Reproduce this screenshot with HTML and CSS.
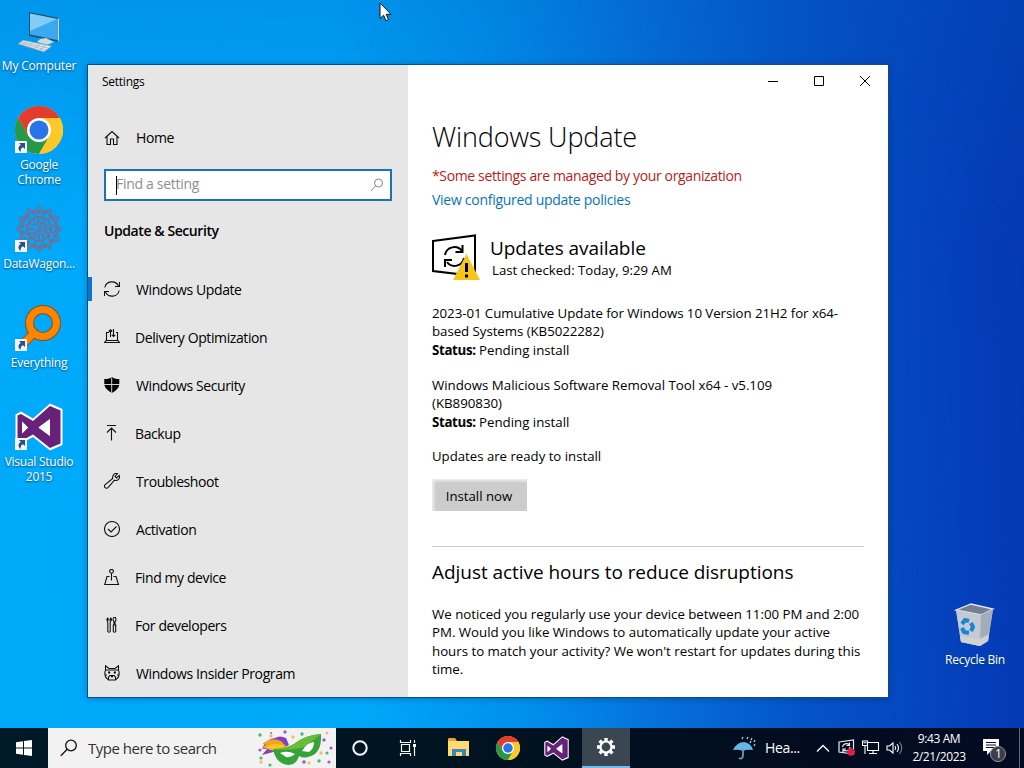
FILE: index.html
```html
<!DOCTYPE html>
<html lang="en">
<head>
<meta charset="utf-8">
<title>Settings</title>
<link rel="stylesheet" href="styles.css">
</head>
<body>
<svg class="defs" width="0" height="0">
  <defs>
    <symbol id="chrome" viewBox="0 0 48 48">
      <circle cx="24" cy="24" r="24" fill="#fcc928"/>
      <path d="M3.2 12A24 24 0 0 0 24 48L34.400 30 24 24 13.600 30Z" fill="#24994a"/>
      <path d="M24 12H44.800A24 24 0 0 1 24 48L34.400 30Z" fill="#fcc928"/>
      <path d="M3.200 12A24 24 0 0 1 44.800 12H24L13.600 30Z" fill="#e33b2e"/>
      <circle cx="24" cy="24" r="12" fill="#fff"/>
      <circle cx="24" cy="24" r="9.500" fill="#2874e8"/>
    </symbol>
    <symbol id="vs" viewBox="0 0 48 48">
      <path d="M35 .5 47.500 6V42L35 47.500 18 34 6 40.500.5 37V11.500L6 8.500 18 15.500Z" fill="#fff"/>
      <path d="M35 3 45.500 7.500V40.500L35 45 18 31.500 6 38 2.500 36V12.500L6 11 18 18ZM35 16 23.500 24.500 35 33ZM7 18.500V30.500L13 24.500Z" fill="#68217a"/>
      <path d="M35 16 23.500 24.500 35 33ZM7 18.500V30.500L13 24.500Z" fill="#fff"/>
    </symbol>
    <symbol id="shortcut" viewBox="0 0 12 12">
      <path d="M0 0H12V12H0Z" fill="#f3f7fc"/>
      <path d="M4 2H10V8L8 6.200C6 7.200 5.500 8.500 5.600 11 2.500 8.500 3 5.500 5.900 4.100Z" fill="#294f91"/>
    </symbol>
  </defs>
</svg>

<div class="desktop">
  <div class="shortcut-item computer">
    <svg width="48" height="48" viewBox="0 0 48 48">
      <path d="M14 4 44 10V34L14 28Z" fill="#294d65"/>
      <path d="M15 5.500 42 11V32L15 26.500Z" fill="#39aaf2"/>
      <path d="M15 5.500 42 11 15 23Z" fill="#82ccf8"/>
      <path d="M42.500 11 44 10V34L42.500 32Z" fill="#c4d8e2"/>
      <path d="M25 31 31 30 39 34 32 37 22 34Z" fill="#c8dce8"/>
      <path d="M8 32 37 38 29 44 3 36Z" fill="#dce6eb" stroke="#7894a6" stroke-width=".8"/>
      <path d="M7 34 33 40M5 35 31 42M12 33 8 37M18 34 13 39M25 36 19 41M31 37 25 42" stroke="#9eb3c2" stroke-width=".7"/>
    </svg>
    <span>My Computer</span>
  </div>
  <div class="shortcut-item google">
    <svg width="48" height="48"><use href="#chrome"/><use href="#shortcut" y="35" width="12" height="12"/></svg>
    <span>Google<br>Chrome</span>
  </div>
  <div class="shortcut-item wagon">
    <svg width="48" height="48" viewBox="0 0 48 48">
      <g fill="none" stroke="#5f7aa8" stroke-width="1.300" transform="translate(24 24)">
        <g id="rosette"><path d="M0-23 6-16 0-9-6-16ZM0 23 6 16 0 9-6 16ZM-12-18 12-18M-12 18H12M-6-6 10 6"/></g>
        <use href="#rosette" transform="rotate(30)"/><use href="#rosette" transform="rotate(60)"/><use href="#rosette" transform="rotate(90)"/><use href="#rosette" transform="rotate(120)"/><use href="#rosette" transform="rotate(150)"/>
        <g stroke="#a5566e"><circle r="7" stroke-dasharray="3 2"/><circle r="12" stroke-dasharray="4 2"/><circle r="17" stroke-dasharray="3 3"/></g>
      </g>
      <use href="#shortcut" y="35" width="12" height="12"/>
    </svg>
    <span>DataWagon...</span>
  </div>
  <div class="shortcut-item everything">
    <svg width="48" height="48" viewBox="0 0 48 48">
      <path d="M20 28 6 42" stroke="#a4540c" stroke-width="9"/>
      <circle cx="28" cy="19" r="13.500" fill="none" stroke="#87500f" stroke-width="9"/>
      <path d="M20 28 6 42" stroke="#ff8500" stroke-width="7"/>
      <circle cx="28" cy="19" r="13.500" fill="none" stroke="#ff8500" stroke-width="7"/>
      <use href="#shortcut" y="35" width="12" height="12"/>
    </svg>
    <span>Everything</span>
  </div>
  <div class="shortcut-item studio">
    <svg width="48" height="48"><use href="#vs"/><use href="#shortcut" y="35" width="12" height="12"/></svg>
    <span>Visual Studio<br>2015</span>
  </div>
  <div class="shortcut-item bin">
    <svg width="48" height="48" viewBox="0 0 48 48">
      <path d="M5 10 20 4 42 9 37 41 29 46 10 42Z" fill="#b4bdcb"/>
      <path d="M5 10 20 4 42 9 30 15Z" fill="#747f91" stroke="#e2e9ee" stroke-width="1.300"/>
      <path d="M5 10 30 15 29 46 10 42Z" fill="#c3cad3"/>
      <path d="M30 15 42 9 37 41 29 46Z" fill="#a2adbb"/>
      <path d="M9 36 29 39 38 34 37 41 29 46 10 42Z" fill="#d2d1d1"/>
      <g fill="none" stroke="#1785d1" stroke-width="4"><path d="M11 24 14 20 18 21"/><path d="M20 23 22 27 20 31"/><path d="M18 33 13 32 11 28"/></g>
    </svg>
    <span>Recycle Bin</span>
  </div>

  <main class="window">
    <aside class="sidebar">
      <div class="title">Settings</div>
      <div class="nav-item home"><svg class="ico" viewBox="0 0 16 16"><path d="M1 8 8 1.500 15 8M3 6.500V14.500H6.500V9H9.500V14.500H13V6.500"/></svg><span>Home</span></div>
      <div class="search"><span class="caret"></span><span class="hint">Find a setting</span>
        <svg width="14" height="14" viewBox="0 0 14 14" fill="none" stroke="#898989"><circle cx="8.500" cy="5" r="4"/><path d="M5.500 8 1 13"/></svg>
      </div>
      <h2>Update &amp; Security</h2>
      <nav>
        <div class="nav-item active"><svg class="ico" viewBox="0 0 16 16"><path d="M.8 6.500A7.300 7.300 0 0 1 14.500 5M15.200 9.500A7.300 7.300 0 0 1 1.500 11M15.500 1V5.500H11M.5 15V10.500H5"/></svg><span>Windows Update</span></div>
        <div class="nav-item"><svg class="ico" viewBox="0 0 16 16"><path d="M5 3.500H2.500V11L.5 13.500H15.500L13.500 11V3.500H12M2.500 11.500H13.500M6.500 8V.8M4.800 2.500 6.500.8 8.200 2.500M9.500 0V7.500M7.800 5.800 9.500 7.500 11.200 5.800"/></svg><span class="left">Delivery Optimization</span></div>
        <div class="nav-item"><svg class="ico" viewBox="0 0 16 16"><path class="solid" d="M8 0C10 1.500 13 2.200 15.300 2V7C15.300 11 11 14.500 8 15.700 5 14.500.3 11 .3 7V2C3 2.200 6 1.500 8 0Z"/><path d="M7.700.5V15.500M0 7.500H16" stroke="#e6e6e6" stroke-width=".9"/></svg><span>Windows Security</span></div>
        <div class="nav-item"><svg class="ico" viewBox="0 0 16 16"><path d="M3 .5H12M7.500 15.500V3M3 7.500 7.500 3 12 7.500"/></svg><span class="left">Backup</span></div>
        <div class="nav-item"><svg class="ico" viewBox="0 0 16 16"><path d="M10.500 7.200 4 14.600C2.200 16.500-.9 13.800 1.200 11.600L8.700 5.500C8 2.500 10.500-.5 13.600.8L11 3.400 12.600 5 15.200 2.400C16.400 5.500 13.800 8.300 10.500 7.200Z"/></svg><span>Troubleshoot</span></div>
        <div class="nav-item"><svg class="ico" viewBox="0 0 16 16"><circle cx="8" cy="8" r="7.500"/><path d="M4 8 7 11 12.500 5.500"/></svg><span>Activation</span></div>
        <div class="nav-item"><svg class="ico" viewBox="0 0 16 16"><circle cx="7.500" cy="2.300" r="1.900"/><path d="M7.500 4.300V11.500M5.500 7.500H3L.7 15.500H14.500L12 7.500H9.500"/></svg><span class="left">Find my device</span></div>
        <div class="nav-item"><svg class="ico" viewBox="0 0 16 16"><path d="M4 .7V3H6.500V.7M4 .7Q2 2.500 3.800 5V14.500Q5 16 6.200 14.500V5Q8.500 2.500 6.500.7M9.500.5H11.500L12 3 11 5V8M9.500.5 9 3 10 5V8M8.800 8H12.200M9.300 8V14.500Q10.500 16 11.700 14.500V8"/></svg><span class="left">For developers</span></div>
        <div class="nav-item"><svg class="ico" viewBox="0 0 16 16"><path d="M1.500.8V5L.8 8 1.500 12 4.500 15H11.500L14.500 12 15.200 8 14.500 5V.8L11 3.500H5ZM1.500 5H14.500M.5 10H3M13 10H15.500M4.500 14.500V12L6 10.500H10L11.500 12V14.500"/><path class="solid" d="M4.200 6.500H6.200V8.500H4.200ZM9.800 6.500H11.800V8.500H9.800ZM7 10.500H9V12.200H7Z"/></svg><span>Windows Insider Program</span></div>
      </nav>
    </aside>
    <section class="content">
      <div class="controls">
        <svg width="12" height="12" viewBox="0 0 12 12"><path d="M1 6.500H11"/></svg>
        <svg width="12" height="12" viewBox="0 0 12 12"><path d="M1.500 1.500H10.500V10.500H1.500Z"/></svg>
        <svg width="12" height="12" viewBox="0 0 12 12"><path d="M1 1 11 11M11 1 1 11"/></svg>
      </div>
      <h1>Windows Update</h1>
      <p class="managed">*Some settings are managed by your organization</p>
      <a class="policies">View configured update policies</a>
      <div class="status">
        <svg width="50" height="50" viewBox="0 0 50 50">
          <path d="M1 7 43 1.500V42L1 37Z" fill="none" stroke="#000" stroke-width="2"/>
          <path d="M13 21A9.500 9.500 0 0 1 30 17M32 24A9.500 9.500 0 0 1 15 28M30.500 11V18H23.500M13 33V26H20" fill="none" stroke="#000" stroke-width="2"/>
          <path d="M34.500 20 48 46H21Z" fill="#f8c51c"/>
          <path d="M34.500 29V38M34.500 40.500V43.500" stroke="#000" stroke-width="3"/>
        </svg>
        <div><h3>Updates available</h3><p class="checked">Last checked: Today, 9:29 AM</p></div>
      </div>
      <div class="update"><p class="u1">2023-01 Cumulative Update for Windows 10 Version 21H2 for x64-<br>based Systems (KB5022282)</p><p><b>Status:</b> Pending install</p></div>
      <div class="update second"><p class="u2">Windows Malicious Software Removal Tool x64 - v5.109<br>(KB890830)</p><p><b>Status:</b> Pending install</p></div>
      <p class="ready">Updates are ready to install</p>
      <button>Install now</button>
      <hr>
      <h3 class="adjust">Adjust active hours to reduce disruptions</h3>
      <p class="hours">We noticed you regularly use your device between 11:00 PM and 2:00<br>PM. Would you like Windows to automatically update your active<br>hours to match your activity? We won't restart for updates during this<br>time.</p>
    </section>
  </main>

  <svg class="pointer" width="13" height="20" viewBox="0 0 13 20"><path d="M1 1V16.500L4.600 13.200 7 18.700 9.500 17.600 7.200 12.300H12Z" fill="#fff" stroke="#111"/></svg>
</div>

<footer class="taskbar">
  <div class="start"><svg width="16" height="16" viewBox="0 0 16 16"><path d="M0 2.200 7 1.200V7.500H0ZM8 1 16 0V7.500H8ZM0 8.500H7V14.800L0 13.800ZM8 8.500H16V16L8 15Z" fill="#fff"/></svg></div>
  <div class="tasksearch">
    <svg width="18" height="18" viewBox="0 0 18 18" fill="none" stroke="#111" stroke-width="1.300"><circle cx="11" cy="6.500" r="5.300"/><path d="M7.200 10.300.8 16.800"/></svg>
    <span>Type here to search</span>
    <svg class="mask" width="76" height="38" viewBox="0 0 76 38">
      <path d="M5 20Q9 10 18 9 23 6 29 9L32 16 20 22 5 26 10 20Z" fill="#8740bd"/>
      <path d="M5 15Q14 8 24 12L30 18 20 20Q12 17 5 20L9 15Z" fill="#f4a51d"/>
      <path d="M8 19Q17 12 28 17L20 23Z" fill="#f2c624"/>
      <path d="M16 20Q28 20 37 15 48 6 64 5 65 23 54 27 47 30 42 27 38 39 27 35 18 32 16 20Z" fill="#36a339"/>
      <path d="M16 20Q28 20 37 15 48 6 64 5 53 15 44 19 31 22 16 20Z" fill="#67bd37"/>
      <path d="M23 24Q30 21 38 25 34 29 29 28ZM45 22Q49 14 57 13 57 20 52 23Z" fill="#fff"/>
      <g fill="#9a5dce"><circle cx="28" cy="3" r="1.700"/><circle cx="3" cy="21" r="1.600"/><circle cx="67" cy="11" r="1.700"/><circle cx="74" cy="19" r="1.600"/><circle cx="47" cy="33" r="1.800"/><circle cx="72" cy="33" r="1.600"/><circle cx="14" cy="4" r="1"/></g>
      <g fill="#f1ba6c"><circle cx="14" cy="7" r="1.700"/><circle cx="36" cy="8" r="1.700"/><circle cx="70" cy="4" r="1.500"/><circle cx="64" cy="24" r="1.700"/><circle cx="52" cy="34" r="1.600"/><circle cx="4" cy="33" r="1.700"/></g>
      <g fill="#47b96e"><circle cx="3" cy="6" r="1.700"/><circle cx="45" cy="5" r="1.700"/><circle cx="70" cy="24" r="1.600"/><circle cx="62" cy="32" r="1.700"/><circle cx="13" cy="36" r="1.600"/><circle cx="4" cy="29" r="1.600"/></g>
    </svg>
  </div>
  <div class="task"><svg width="18" height="18" viewBox="0 0 18 18"><circle cx="9" cy="9" r="6.700" fill="none" stroke="#f1f7fa" stroke-width="2"/></svg></div>
  <div class="task"><svg width="18" height="18" viewBox="0 0 18 18" fill="none" stroke="#f4f7f8" stroke-width="1.200"><path d="M1.500 1V3.500H11.500V1M2.500 5.500H10.500V12.500H2.500ZM1.500 17V14.500H11.500V17M15.500 1V4M15.500 8V17"/><path d="M14 5H17V8H14Z" fill="#fff" stroke="none"/></svg></div>
  <div class="task wide"><svg width="24" height="22" viewBox="0 0 24 22"><path d="M1 2Q1 1 2 1H8L10 4H22V19H1Z" fill="#e8a72c"/><path d="M1 4H22V19H1Z" fill="#ffda72"/><path d="M5 12H19V19H15V15H9V19H5Z" fill="#3887bf"/></svg></div>
  <div class="task pinned"><svg width="24" height="24"><use href="#chrome"/></svg></div>
  <div class="task pinned"><svg width="25" height="25"><use href="#vs"/></svg></div>
  <div class="task current"><svg width="20" height="20" viewBox="0 0 20 20" fill="none" stroke="#fff"><circle cx="10" cy="10" r="5.500" stroke-width="2.200"/><path d="M10 1V4M10 16V19M1 10H4M16 10H19M3.600 3.600 5.700 5.700M14.300 14.300 16.400 16.400M16.400 3.600 14.300 5.700M5.700 14.300 3.600 16.400" stroke-width="3.400"/></svg></div>
  <div class="tray">
    <svg width="25" height="25" viewBox="0 0 25 25"><path d="M0 14Q4 6 11 6 18 7 20 14 14 13 10 15 5 13 0 14Z" fill="#67b5e6"/><path d="M10 13V20Q9 24 6 22" fill="none" stroke="#7896a6" stroke-width="1.800"/><path d="M9 3 10 1M14 3 15 1M18 4 19 2M21 6 22 4M17 7 18 5M21 10 22 8" stroke="#b5d5e8" stroke-width="1.200"/></svg>
    <span class="weather">Hea...</span>
    <svg class="chev" width="14" height="9" viewBox="0 0 14 9" fill="none" stroke="#fff" stroke-width="1.300"><path d="M1 7.500 7 1.500 13 7.500"/></svg>
    <svg class="sync" width="18" height="18" viewBox="0 0 18 18" fill="none" stroke="#e9edf0" stroke-width="1.200"><path d="M1 3 15.500 1V15L1 13ZM4.500 8A4 4 0 0 1 11 5.500M11.500 3.500V6.500H8.500M12 8A4 4 0 0 1 5.500 11M5 13V10H8"/><circle cx="13" cy="13" r="3.800" fill="#e51e3f" stroke="none"/></svg>
    <svg class="net" width="18" height="16" viewBox="0 0 18 16" fill="none" stroke="#fff" stroke-width="1.100"><path d="M6 2.500H16.500V10.500H5.500V6M.5 1H5.500V5.500H.5ZM3 5.500V14M11 10.500V13.500M7 13.500H15M1.500 2.700H4.500"/></svg>
    <svg class="sound" width="17" height="16" viewBox="0 0 17 16" fill="none" stroke="#fff" stroke-width="1.100"><path d="M1 6V10H3.500L7 13V3L3.500 6ZM9 6Q10.500 8 9 10M11 4Q14 8 11 12"/><path d="M13.500 2Q18 8 13.500 14" stroke="#7a8593"/></svg>
    <div class="clock"><span>9:43 AM</span><span class="date">2/21/2023</span></div>
    <div class="notes"><svg width="26" height="26" viewBox="0 0 26 26"><path d="M1 1H17V13H9L5 17V13H1Z" fill="#fff"/><path d="M4 4.500H14M4 7H14M4 9.500H14" stroke="#071225"/><circle cx="16" cy="16" r="7.600" fill="#3c3f4a" stroke="#8c919b"/></svg><span>1</span></div>
    <div class="peek"></div>
  </div>
</footer>
</body>
</html>
```

FILE: styles.css
```css
* { box-sizing: border-box; }
body { margin: 0; width: 1024px; height: 768px; overflow: hidden; font: 14px/18px "Open Sans", "Noto Sans", sans-serif; color: #000; }
h1, h2, h3, p { margin: 0; font-weight: 400; white-space: nowrap; }
svg { flex: none; display: block; }
.defs { position: absolute; }
.desktop { position: relative; height: 728px; background: linear-gradient(180deg, #0058c03d 0, #0058c000 35%), linear-gradient(88deg, #00aafb 0, #00a8fa 34%, #0090ec 50%, #0570da 63%, #0553c6 77%, #0440ba 92%, #0438b2 100%); }
.shortcut-item { position: absolute; left: 0; width: 78px; display: flex; flex-direction: column; align-items: center; color: #fff; font-size: 12px; line-height: 15px; text-align: center; white-space: nowrap; text-shadow: 0 1px 2px #034370; letter-spacing: -.25px; }
.computer { top: 8px; }
.computer span { margin-top: 2px; letter-spacing: -.18px; }
.google { top: 106px; }
.google span, .everything span, .studio span { margin-top: 3px; }
.wagon { top: 205px; }
.wagon span { margin-top: 3px; }
.everything { top: 304px; }
.studio { top: 403px; }
.bin { left: 936px; top: 600px; }
.bin span { margin-top: 4px; }
.window { position: absolute; left: 87px; top: 64px; width: 802px; height: 634px; border: 1px solid #114b80; display: grid; grid-template-columns: 320px 1fr; background: #fff; box-shadow: 0 1px 6px #00285055; }
.sidebar { background: #e6e6e6; box-shadow: inset 2px 1px 0 #d6eef9; }
.title { height: 49px; padding: 8px 14px; font-size: 12px; letter-spacing: -.25px; }
.nav-item { position: relative; height: 48px; display: flex; align-items: center; gap: 16px; padding-left: 16px; white-space: nowrap; letter-spacing: -.4px; }
.nav-item span { padding-top: 1px; }
.nav-item.home { padding-bottom: 1px; }
.nav-item .left { margin-left: -1px; }
.ico { width: 16px; height: 16px; fill: none; stroke: #111; stroke-width: 1.1; }
.solid { fill: #000; stroke: none; }
.active::before { content: ""; position: absolute; left: 0; top: 12px; width: 4px; height: 24px; background: #0878cf; }
.search { margin: 7px 16px 0; height: 32px; border: 2px solid #1b72b8; background: #fff; display: flex; align-items: center; padding: 0 6px 0 10px; color: #8e8e8e; }
.search svg { margin-left: auto; }
.caret { width: 1px; height: 19px; background: #000; }
.hint { margin: -2px 0 0 -1px; letter-spacing: -.3px; }
.sidebar h2 { height: 64px; padding: 21px 16px 0; font-size: 14px; font-weight: 600; letter-spacing: -.42px; }
.content { padding: 0 24px; }
.controls { height: 32px; display: flex; justify-content: flex-end; align-items: center; gap: 34px; margin-right: -7px; fill: none; stroke: #000; }
.content h1 { margin-top: 20px; font-size: 27px; line-height: 40px; font-weight: 340; letter-spacing: -.13px; }
.managed { margin-top: 10px; color: #b71b20; letter-spacing: -.36px; }
.policies { display: block; margin-top: 6px; color: #0872be; letter-spacing: -.28px; }
.status { margin-top: 25px; display: flex; gap: 8px; height: 50px; }
.status h3 { margin-top: 2px; font-size: 19px; line-height: 25px; letter-spacing: -.07px; }
.checked { margin: 1px 0 0 2px; font-size: 13.2px; line-height: 17px; }
.update { margin-top: 20px; font-size: 13.3px; line-height: 18.4px; letter-spacing: -.02px; }
.u1 { letter-spacing: -.06px; }
.update.second { margin-top: 16.6px; }
.update b { font-weight: 700; letter-spacing: -.35px; }
.ready { margin-top: 16px; font-size: 13.2px; line-height: 18px; }
button { display: block; margin: 14px 0 0; width: 95px; height: 32px; border: 0; padding: 1px 1px 0 0; background: #ccc; box-shadow: inset 2px 2px 3px #eee; font: 13.2px "Open Sans", sans-serif; white-space: nowrap; }
hr { height: 1px; margin: 35px 0 11px; border: 0; background: #ccc; }
.adjust { font-size: 19px; line-height: 28px; letter-spacing: -.05px; }
.hours { margin-top: 19px; font-size: 13.3px; line-height: 18.4px; letter-spacing: -.02px; }
.pointer { position: absolute; left: 379px; top: 2px; }
.taskbar { height: 40px; display: flex; color: #fff; background: linear-gradient(90deg, #011a28, #001320 45%, #020c20 80%, #030b23); }
.start { width: 48px; display: grid; place-items: center; }
.tasksearch { width: 288px; background: #f2f2f2; color: #333; display: flex; align-items: center; padding: 0 3px 0 12px; white-space: nowrap; }
.tasksearch span { margin-left: 10px; font-size: 15px; letter-spacing: -.5px; }
.mask { margin-left: auto; }
.task { width: 48px; display: grid; place-items: center; }
.task.wide { width: 54px; padding-left: 0; }
.task.pinned { padding-right: 4px; }
.task.current { background: #3b4653; border-bottom: 2px solid #76b9ed; }
.tray { flex: 1; display: flex; align-items: center; padding-left: 103px; white-space: nowrap; }
.weather { width: 35px; margin-left: 7px; letter-spacing: -.35px; }
.chev { margin-left: 16px; }
.sync { margin-left: 8px; }
.net { margin-left: 6px; }
.sound { margin-left: 6px; }
.clock { width: 60px; margin-left: 6px; display: flex; flex-direction: column; align-items: center; font-size: 12px; letter-spacing: -.4px; }
.clock .date { letter-spacing: -.4px; }
.notes { position: relative; margin-left: 13px; padding-top: 5px; }
.notes span { position: absolute; left: 13px; top: 12px; font-size: 12px; }
.peek { width: 1px; height: 40px; margin: 0 4px 0 auto; background: #5d6473; }
```
